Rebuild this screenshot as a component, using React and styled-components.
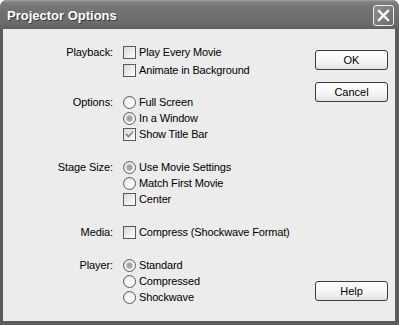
import React from 'react';
import styled, { createGlobalStyle } from 'styled-components';

const Global = createGlobalStyle`
  html, body { margin: 0; padding: 0; background: #ffffff; }
  body { font-family: "Liberation Sans", Arial, sans-serif; }
`;

const Window = styled.div`
  width: 399px;
  height: 325px;
  display: flex;
  flex-direction: column;
  border-radius: 7px 7px 0 0;
  overflow: hidden;
  background: #5c5c5c;
`;

const TitleBar = styled.div`
  height: 29px;
  flex: none;
  display: flex;
  align-items: center;
  justify-content: space-between;
  padding: 0 5px 0 7px;
  background: linear-gradient(#a5a5a5 0, #808080 2px, #747474 8px, #6c6c6c 22px, #606060 29px);
`;

const Title = styled.span`
  font: bold 13px "Liberation Sans", Arial, sans-serif;
  color: #ffffff;
  text-shadow: 1px 1px 0 #3a3a3a;
  padding-top: 2px;
`;

const CloseButton = styled.div`
  width: 21px;
  height: 21px;
  margin-top: 2px;
  box-sizing: border-box;
  border: 1px solid #eeeeee;
  border-radius: 3px;
  background: linear-gradient(135deg, #909090, #6a6a6a);
  display: flex;
  align-items: center;
  justify-content: center;
`;

const Body = styled.div`
  flex: 1;
  display: flex;
  margin: 0 4px 4px 3px;
  background: #ececec;
`;

const Form = styled.div`
  flex: 1;
  display: flex;
  flex-direction: column;
  padding-top: 15px;
`;

const Group = styled.div`
  display: grid;
  grid-template-columns: 110px 1fr;
  column-gap: 10px;
  margin-top: ${p => p.$gap || 0}px;
`;

const Label = styled.div`
  text-align: right;
  font-size: 11px;
  letter-spacing: -0.1px;
  line-height: 16px;
  height: 16px;
  color: #000;
`;

const Options = styled.div`
  display: flex;
  flex-direction: column;
  gap: ${p => p.$gap || 0}px;
`;

const OptionRow = styled.div`
  display: flex;
  align-items: center;
  gap: 3px;
  height: 16px;
  font-size: 11px;
  letter-spacing: -0.15px;
  color: #000;
  white-space: nowrap;
`;

const CheckBox = styled.span`
  width: 13px;
  height: 13px;
  box-sizing: border-box;
  border: 1px solid #5a5a5a;
  background: linear-gradient(135deg, #d8d8d8, #f4f4f4 70%, #ffffff);
  display: flex;
  align-items: center;
  justify-content: center;
  flex: none;
`;

const Radio = styled.span`
  width: 13px;
  height: 13px;
  box-sizing: border-box;
  border: 1px solid #5a5a5a;
  border-radius: 50%;
  background: radial-gradient(circle at 65% 65%, #ffffff, #f2f2f2 50%, #d6d6d6);
  display: flex;
  align-items: center;
  justify-content: center;
  flex: none;
`;

const Dot = styled.span`
  width: 5px;
  height: 5px;
  border-radius: 50%;
  background: #a3a3a3;
  box-shadow: 0 0 0 1px #c4c4c4;
`;

const Buttons = styled.div`
  width: 73px;
  display: flex;
  flex-direction: column;
  gap: 12px;
  padding: 21px 0 20px;
  margin-right: 7px;
`;

const Spacer = styled.div`
  flex: 1;
`;

const Button = styled.div`
  height: 20px;
  box-sizing: border-box;
  border: 1px solid #3c3c3c;
  border-radius: 3px;
  background: linear-gradient(#ffffff, #f4f4f4 60%, #e2e2e2);
  font-size: 11px;
  display: flex;
  align-items: center;
  justify-content: center;
  color: #000;
`;

function Check({ checked }) {
  return (
    <CheckBox>
      {checked && (
        <svg width="9" height="9" viewBox="0 0 9 9">
          <path d="M1 4 L3.5 6.5 L8 1.5" fill="none" stroke="#8a8a8a" strokeWidth="1.8" />
        </svg>
      )}
    </CheckBox>
  );
}

function RadioBtn({ checked }) {
  return <Radio>{checked && <Dot />}</Radio>;
}

const groups = [
  { label: 'Playback:', gap: 0, rowGap: 2, items: [['c', 'Play Every Movie'], ['c', 'Animate in Background']] },
  { label: 'Options:', gap: 16, items: [['r', 'Full Screen'], ['r', 'In a Window', true], ['c', 'Show Title Bar', true]] },
  { label: 'Stage Size:', gap: 17, items: [['r', 'Use Movie Settings', true], ['r', 'Match First Movie'], ['c', 'Center']] },
  { label: 'Media:', gap: 17, items: [['c', 'Compress (Shockwave Format)']] },
  { label: 'Player:', gap: 17, items: [['r', 'Standard', true], ['r', 'Compressed'], ['r', 'Shockwave']] },
];

export default function App() {
  return (
    <>
      <Global />
      <Window>
        <TitleBar>
          <Title>Projector Options</Title>
          <CloseButton>
            <svg width="13" height="13" viewBox="0 0 13 13">
              <path d="M2 2 L11 11 M11 2 L2 11" stroke="#ffffff" strokeWidth="2.4" strokeLinecap="square" />
            </svg>
          </CloseButton>
        </TitleBar>
        <Body>
          <Form>
            {groups.map(g => (
              <Group key={g.label} $gap={g.gap}>
                <Label>{g.label}</Label>
                <Options $gap={g.rowGap}>
                  {g.items.map(([kind, text, on]) => (
                    <OptionRow key={text}>
                      {kind === 'c' ? <Check checked={on} /> : <RadioBtn checked={on} />}
                      {text}
                    </OptionRow>
                  ))}
                </Options>
              </Group>
            ))}
          </Form>
          <Buttons>
            <Button>OK</Button>
            <Button>Cancel</Button>
            <Spacer />
            <Button>Help</Button>
          </Buttons>
        </Body>
      </Window>
    </>
  );
}
